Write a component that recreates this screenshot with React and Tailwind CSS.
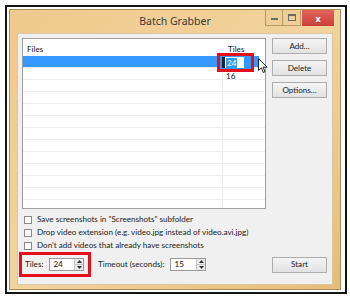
import React from "react";

const T = "text-[8.1px] font-['Lato',sans-serif]";

function Checkbox({ label }) {
  return (
    <div className="h-[13px] flex items-center gap-[3px] pl-[6px]">
      <div className="w-[8px] h-[8px] border border-[#8a8a8a] bg-white shrink-0" />
      <span className={`ml-[2px] ${T} text-[#222] whitespace-nowrap leading-none`}>{label}</span>
    </div>
  );
}

function Spinner({ value, w }) {
  return (
    <div className={`h-[13px] ${w} flex border border-[#9a9a9a] bg-white`}>
      <div className={`flex-1 ${T} leading-[11px] pl-[3px] text-[#111]`}>{value}</div>
      <div className="w-[9px] flex flex-col border-l border-[#c8c8c8] bg-[#eaeaea]">
        <div className="flex-1 flex items-center justify-center border-b border-[#c8c8c8]">
          <svg width="5" height="3" viewBox="0 0 5 3"><path d="M0 3 L2.5 0 L5 3 Z" fill="#333" /></svg>
        </div>
        <div className="flex-1 flex items-center justify-center">
          <svg width="5" height="3" viewBox="0 0 5 3"><path d="M0 0 L2.5 3 L5 0 Z" fill="#333" /></svg>
        </div>
      </div>
    </div>
  );
}

function Btn({ children, className = "" }) {
  return (
    <div
      className={`h-[16px] w-[55px] flex items-center justify-center border border-[#adadad] bg-gradient-to-b from-[#f4f4f4] to-[#e2e2e2] ${T} text-[#222] leading-none ${className}`}
    >
      {children}
    </div>
  );
}

export default function App() {
  const rows = Array.from({ length: 13 });
  return (
    <div className="w-[350px] h-[296px] bg-white pl-[5px] pt-[5px] pr-[3px] pb-[2px] font-['Noto_Sans',sans-serif]">
      <div className="h-full border-2 border-[#141414] bg-white pl-[2px] pt-[2px] pr-[4px] pb-[2px] flex">
        <div className="flex-1 flex flex-col border border-[#a88c5c] bg-gradient-to-br from-[#efc98c] via-[#f2d39d] to-[#e8bc76]">
          {/* title bar */}
          <div className="h-[23px] grid grid-cols-[1fr_auto_1fr]">
            <div />
            <div className="flex items-center text-[10.5px] text-[#3a3a3a] pt-[1px]">Batch Grabber</div>
            <div className="flex justify-end items-start pr-[6px]">
              <div className="w-[18px] h-[16px] border border-[#b99a64] border-t-0 bg-[#efcf98] flex items-center justify-center">
                <div className="w-[7px] h-[2px] bg-[#6a6a6a] mt-[2px]" />
              </div>
              <div className="w-[18px] h-[16px] border border-[#b99a64] border-t-0 border-l-0 bg-[#efcf98] flex items-center justify-center">
                <div className="w-[8px] h-[7px] border-[1.5px] border-[#6a6a6a] border-t-[2px]" />
              </div>
              <div className="w-[32px] h-[16px] bg-gradient-to-b from-[#e2645c] to-[#c9403a] flex items-center justify-center ml-[1px]">
                <span className="text-white text-[9px] font-bold leading-none">x</span>
              </div>
            </div>
          </div>
          {/* client */}
          <div className="flex-1 mx-[7px] mb-[4px] bg-[#f0f0f0] border border-[#d9c7a3] flex flex-col">
            <div className="flex pl-[4px] pt-[4px] pr-[5px]">
              {/* list */}
              <div className="relative w-[244px] h-[171px] border border-[#a0a0a0] bg-white overflow-hidden">
                <div className={`h-[17px] flex ${T} text-[#222] leading-none`}>
                  <div className="w-[200px] pl-[4px] pt-[6px]">Files</div>
                  <div className="pl-[5px] pt-[6px]">Tiles</div>
                </div>
                {rows.map((_, i) => (
                  <div key={i} className="h-[12px] flex border-b border-[#ececec]">
                    <div className={`w-[200px] border-r border-[#ececec] ${i === 0 ? "bg-[#3399ff]" : ""}`} />
                    <div className={`w-[36px] ${T} leading-[12px] pl-[3px] pt-[2px] text-[#222] ${i === 0 ? "bg-[#3399ff]" : ""}`}>
                      {i === 1 ? "16" : ""}
                    </div>
                  </div>
                ))}
                {/* edit cell with red highlight */}
                <div className="absolute left-[194px] top-[14px] w-[37px] h-[19px] border-[3px] border-[#e3101c] bg-[#3399ff] flex items-center pl-[2px]">
                  <div className="h-[11px] w-[22px] bg-white border-l-[3px] border-[#222] flex items-center pl-[1px]">
                    <span className={`bg-[#3399ff] text-white ${T} leading-[10px] px-[1px]`}>24</span>
                  </div>
                </div>
              </div>
              {/* buttons */}
              <div className="ml-auto flex flex-col gap-[6px]">
                <Btn>Add...</Btn>
                <Btn>Delete</Btn>
                <Btn>Options...</Btn>
              </div>
            </div>
            <div className="mt-[4px]">
              <Checkbox label={'Save screenshots in "Screenshots" subfolder'} />
              <Checkbox label="Drop video extension (e.g. video.jpg instead of video.avi.jpg)" />
              <Checkbox label="Don't add videos that already have screenshots" />
            </div>
            <div className="flex items-center pl-[1px] pr-[5px]">
              <div className="h-[25px] w-[72px] border-[3px] border-[#e3101c] flex items-center pl-[3px] gap-[6px]">
                <span className={`${T} text-[#222] leading-none`}>Tiles:</span>
                <Spinner value="24" w="w-[35px]" />
              </div>
              <span className={`ml-[7px] ${T} text-[#222] leading-none whitespace-nowrap`}>Timeout (seconds):</span>
              <div className="ml-[6px]">
                <Spinner value="15" w="w-[36px]" />
              </div>
              <Btn className="ml-auto">Start</Btn>
            </div>
          </div>
        </div>
      </div>
      {/* mouse cursor */}
      <svg className="absolute left-[258px] top-[58px]" width="10" height="16" viewBox="0 0 10 16">
        <path d="M0.5 0.5 L0.5 12.5 L3.3 9.8 L5.3 14.5 L7 13.7 L5.1 9.2 L9 9.2 Z" fill="white" stroke="#222" strokeWidth="1" />
      </svg>
    </div>
  );
}
